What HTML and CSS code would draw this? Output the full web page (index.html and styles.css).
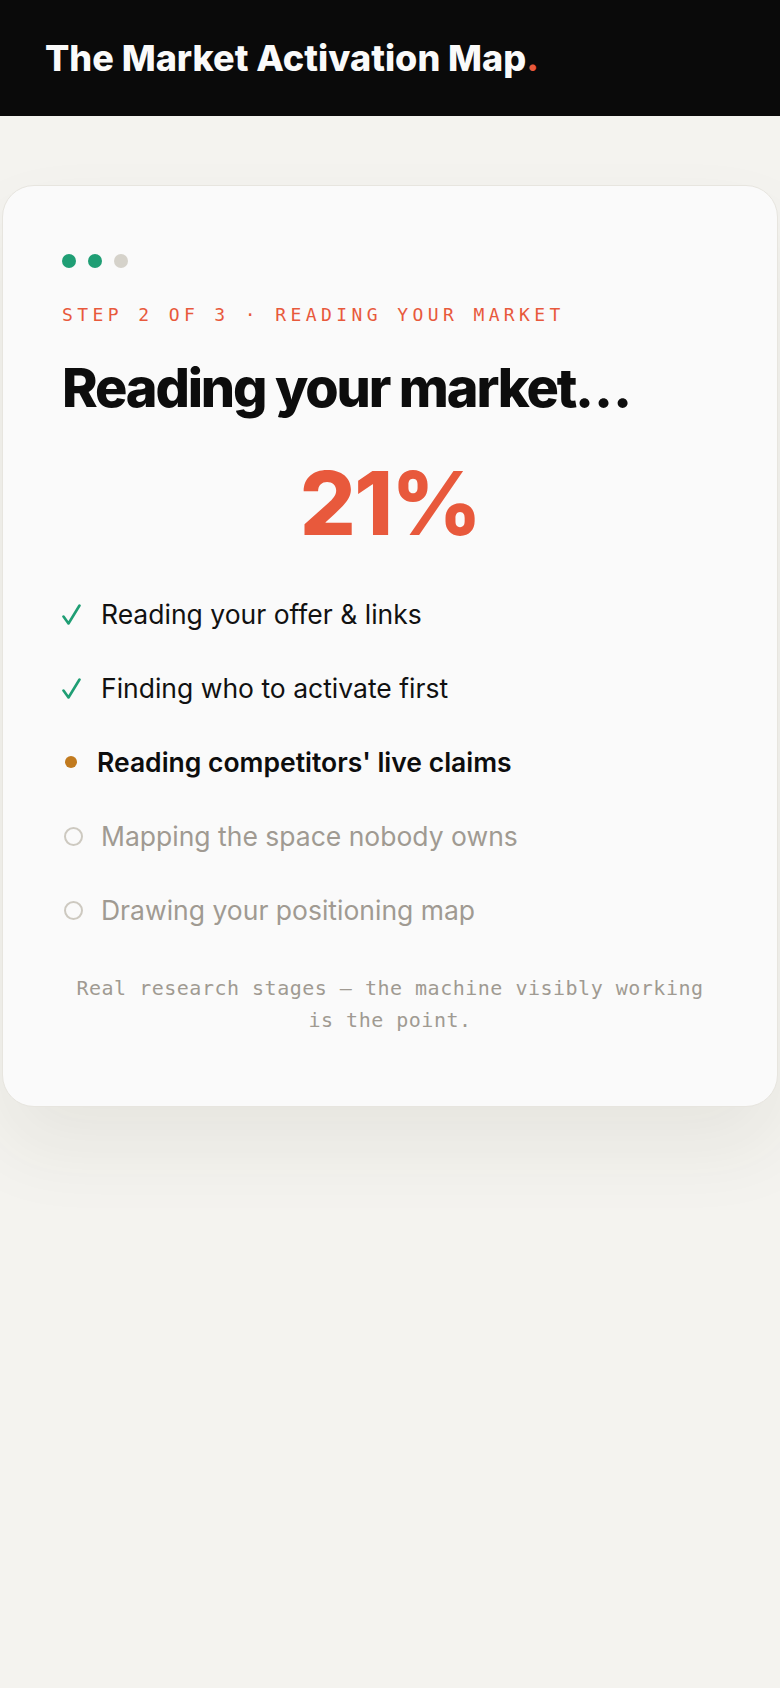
FILE: index.html
```html
<!DOCTYPE html>
<html lang="en">
<head>
    <meta charset="UTF-8">
    <meta name="viewport" content="width=device-width, initial-scale=1.0">
    <title>The Market Activation Map</title>
    <link rel="stylesheet" href="styles.css">
</head>
<body>
<header class="topbar">
    <h1 class="brand">The Market Activation Map<span class="brand-dot">.</span></h1>
</header>

<main class="page">
    <section class="card">
        <div class="steps">
            <span class="step-dot done"></span>
            <span class="step-dot done"></span>
            <span class="step-dot"></span>
        </div>
        <p class="eyebrow">Step 2 of 3 · Reading your market</p>
        <h2 class="title">Reading your market…</h2>
        <div class="percent">21%</div>

        <ul class="stages">
            <li class="stage is-done">
                <svg class="tick" viewBox="0 0 19 21" width="19" height="21"><path d="M1.5 12.5 L6.5 19.5 L17.5 1.5"/></svg>
                <span>Reading your offer &amp; links</span>
            </li>
            <li class="stage is-done">
                <svg class="tick" viewBox="0 0 19 21" width="19" height="21"><path d="M1.5 12.5 L6.5 19.5 L17.5 1.5"/></svg>
                <span>Finding who to activate first</span>
            </li>
            <li class="stage is-active">
                <span class="pulse"></span>
                <span>Reading competitors' live claims</span>
            </li>
            <li class="stage is-pending">
                <span class="ring"></span>
                <span>Mapping the space nobody owns</span>
            </li>
            <li class="stage is-pending">
                <span class="ring"></span>
                <span>Drawing your positioning map</span>
            </li>
        </ul>

        <p class="note">Real research stages — the machine visibly working is the point.</p>
    </section>
</main>
</body>
</html>
```

FILE: styles.css
```css
* {
    margin: 0;
    padding: 0;
    box-sizing: border-box;
}
body {
    font-family: Inter, "Noto Sans", sans-serif;
    background-color: #f4f3ef;
    color: #111111;
    min-height: 1688px;
}
.topbar {
    background-color: #0a0a0a;
    height: 116px;
    display: flex;
    align-items: center;
    padding: 0 45px;
}
.brand {
    color: #fafafa;
    font-size: 36px;
    font-weight: 800;
    letter-spacing: 0;
}
.brand-dot {
    color: #e8593c;
}
.page {
    padding: 69px 2px 0;
}
.card {
    background-color: #fafafa;
    border: 1px solid #e7e5df;
    border-radius: 32px;
    padding: 68px 59px 70px;
    box-shadow: 0 40px 80px rgba(60, 50, 30, 0.07);
}
.steps {
    display: flex;
    gap: 12px;
}
.step-dot {
    width: 14px;
    height: 14px;
    border-radius: 50%;
    background-color: #d5d2ca;
}
.step-dot.done {
    background-color: #1f9e74;
}
.eyebrow {
    margin-top: 35px;
    font-family: "DejaVu Sans Mono", monospace;
    font-size: 18px;
    line-height: 24px;
    letter-spacing: 4.4px;
    text-transform: uppercase;
    color: #e8593c;
}
.title {
    margin-top: 31px;
    font-size: 54px;
    line-height: 1.1;
    font-weight: 800;
    letter-spacing: -0.04em;
    color: #0d0d0d;
}
.percent {
    margin-top: 42px;
    text-align: center;
    font-size: 88px;
    line-height: 1;
    font-weight: 800;
    letter-spacing: -0.02em;
    color: #e8593c;
}
.stages {
    list-style: none;
    margin-top: 51px;
    display: flex;
    flex-direction: column;
    gap: 42px;
}
.stage {
    display: flex;
    align-items: center;
    gap: 20px;
    font-size: 26.5px;
    line-height: 32px;
}
.tick {
    flex: none;
    fill: none;
    stroke: #1f9e74;
    stroke-width: 2.6;
    stroke-linecap: round;
    stroke-linejoin: round;
}
.pulse {
    flex: none;
    width: 12px;
    height: 12px;
    margin-left: 3px;
    border-radius: 50%;
    background-color: #c17a1e;
}
.ring {
    flex: none;
    width: 19px;
    height: 19px;
    margin-left: 2px;
    margin-right: -2px;
    border-radius: 50%;
    border: 2px solid #cdc9c0;
}
.is-active {
    font-weight: 600;
    color: #0d0d0d;
}
.is-pending {
    color: #a09a92;
}
.note {
    margin-top: 46px;
    text-align: center;
    font-family: "DejaVu Sans Mono", monospace;
    font-size: 20px;
    line-height: 32px;
    letter-spacing: 0.5px;
    color: #a09a92;
}
```
